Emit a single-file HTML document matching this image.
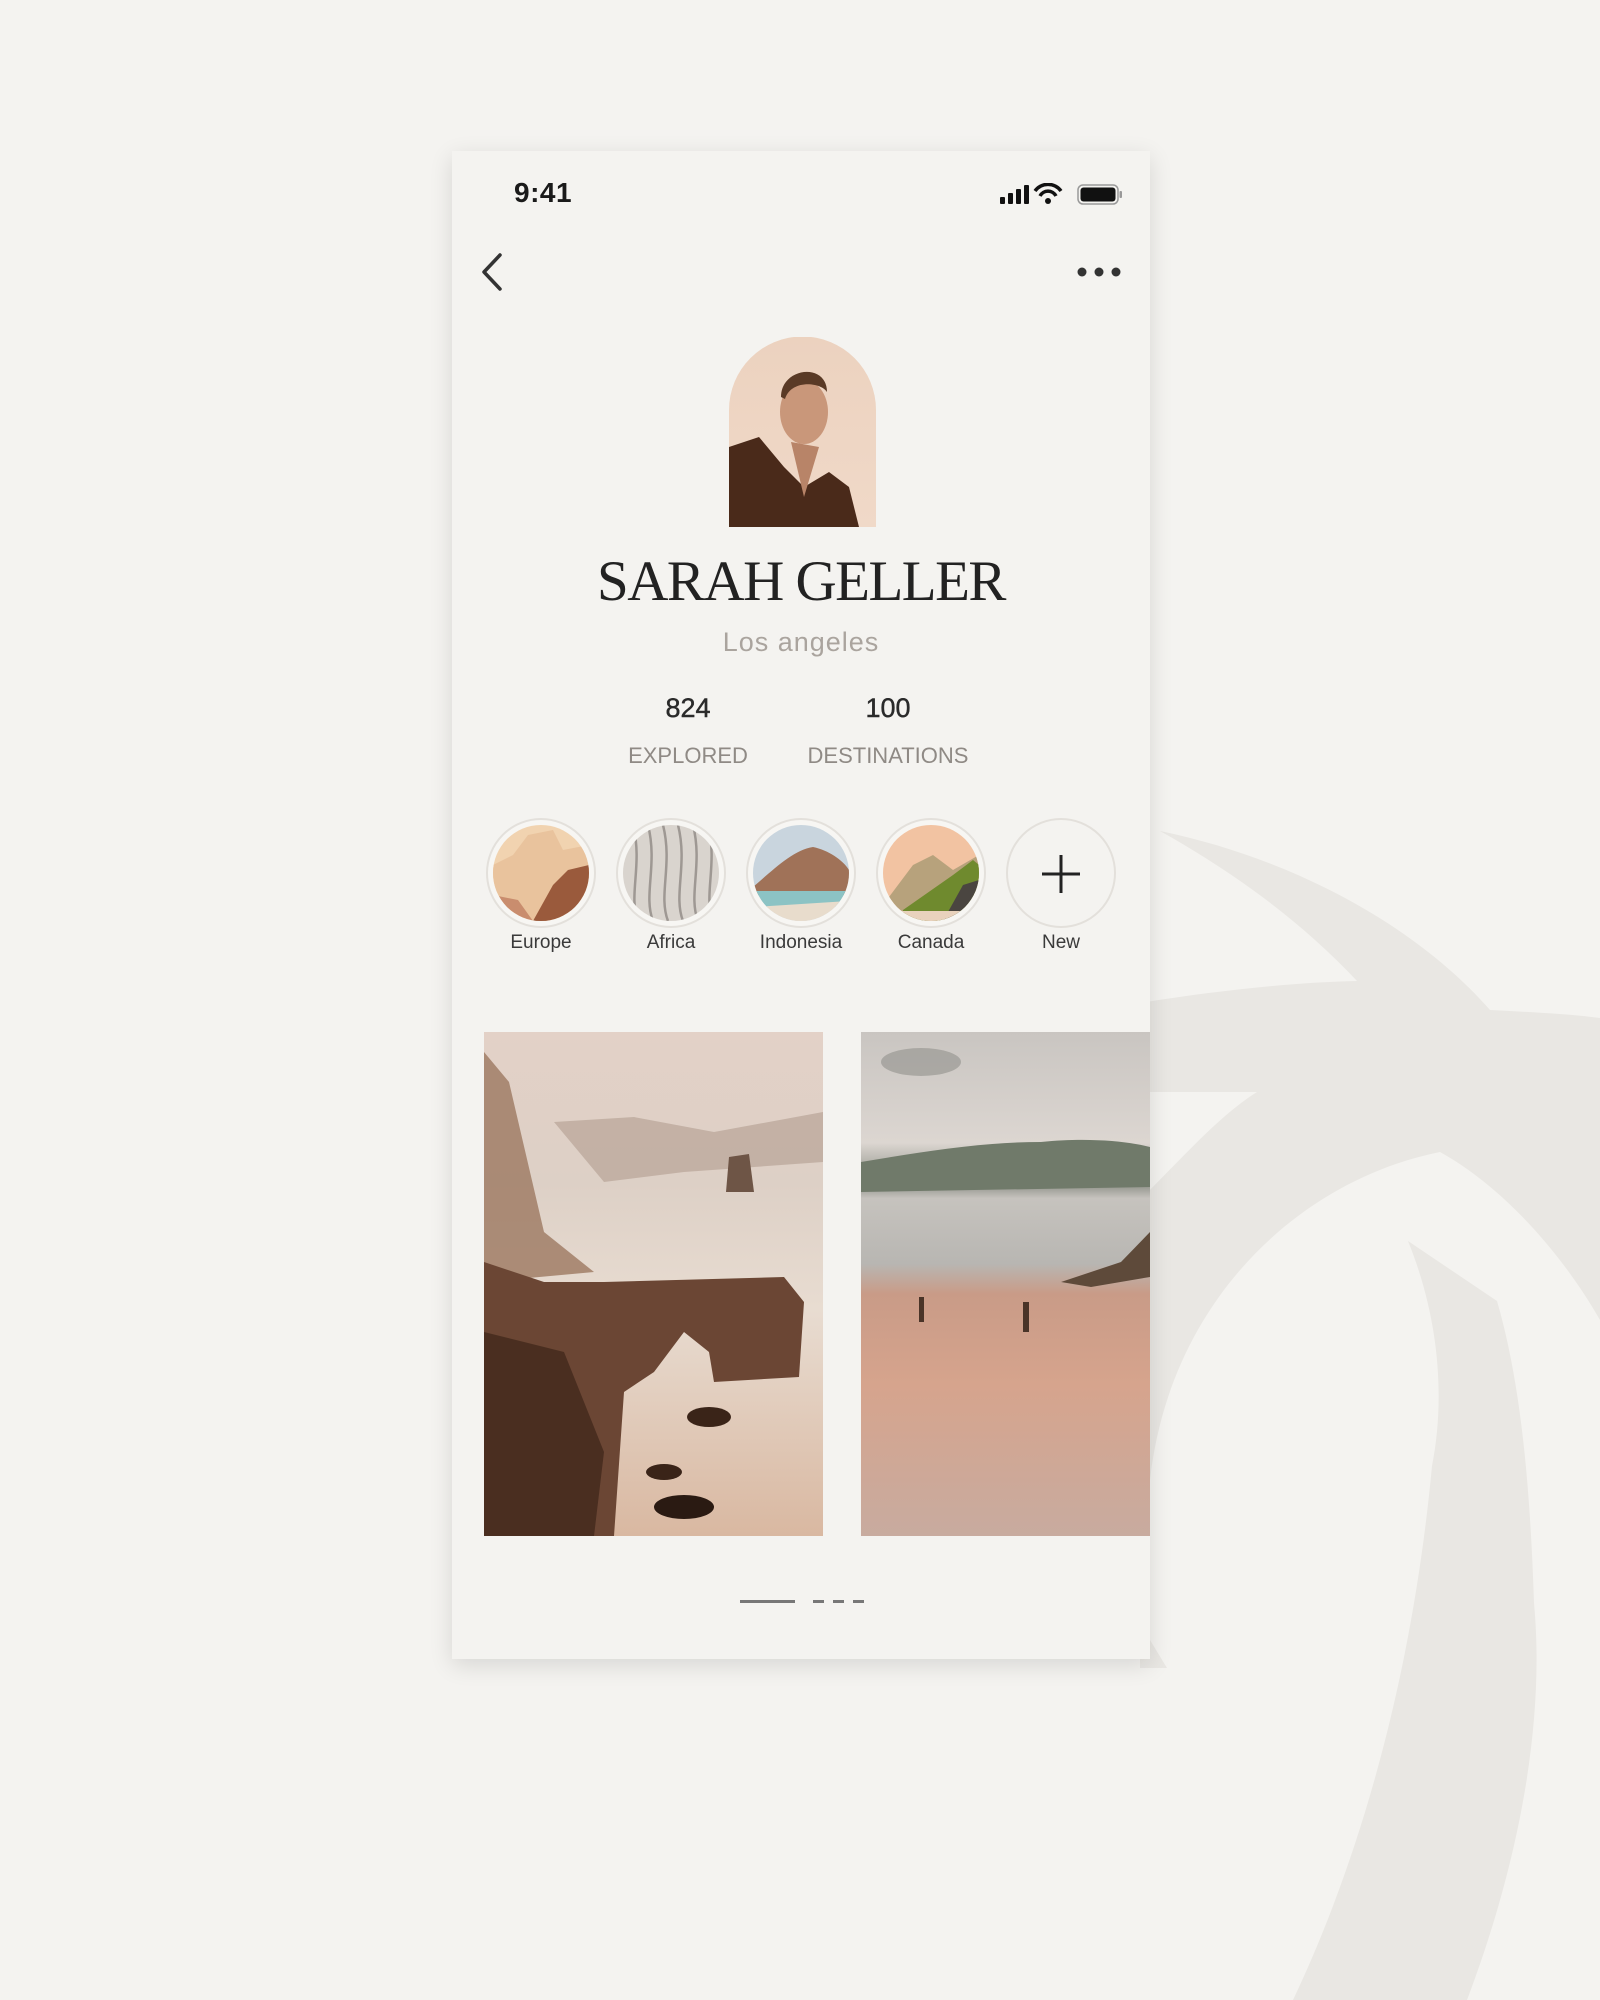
<!DOCTYPE html>
<html><head><meta charset="utf-8"><style>
*{margin:0;padding:0;box-sizing:border-box}
body{width:1600px;height:2000px;background:#f4f3f0;position:relative;overflow:hidden;font-family:"Liberation Sans",sans-serif}
#bg{position:absolute;left:0;top:0}
.phone{position:absolute;left:452px;top:151px;width:698px;height:1508px;background:#f4f3f0;box-shadow:0 6px 22px rgba(0,0,0,.12);overflow:hidden}
.abs{position:absolute}
.time{left:62px;top:26px;font-size:28px;font-weight:bold;color:#1a1a1a;letter-spacing:.5px}
.name{left:0;width:698px;top:398px;text-align:center;font-family:"Liberation Serif",serif;font-size:57px;color:#222;letter-spacing:-1.5px}
.loc{left:0;width:698px;top:476px;text-align:center;font-size:27px;color:#aaa49e;letter-spacing:1px}
.num{font-size:27px;color:#2a2a2a;text-align:center;width:200px;-webkit-text-stroke:0.4px #2a2a2a}
.lbl{font-size:22px;color:#8f8a85;text-align:center;width:220px;letter-spacing:0}
.c{position:absolute;top:667px;width:110px;height:110px;border-radius:50%;border:2px solid #e3e0db;background:#f7f6f3}
.c svg{position:absolute;left:5px;top:5px;width:96px;height:96px;border-radius:50%}
.cl{position:absolute;top:781px;width:140px;text-align:center;font-size:19px;color:#3a3a3a}
</style></head><body>
<svg id="bg" width="1600" height="2000">
<g fill="#e9e7e3">
<path d="M1160,831 C1300,860 1420,930 1490,1010 C1530,1012 1570,1014 1600,1018 L1600,1320 C1560,1250 1500,1185 1440,1152 C1300,1180 1170,1300 1150,1480 L1150,1640 L1167,1668 L1140,1668 L1140,1200 C1180,1160 1220,1115 1257,1092 L1140,1092 L1140,1003 C1220,990 1300,982 1357,981 C1300,920 1230,870 1160,831 Z"/>
<path d="M1408,1241 C1440,1320 1445,1400 1432,1466 C1410,1700 1350,1880 1293,2000 L1467,2000 C1520,1860 1545,1720 1534,1603 C1530,1480 1520,1380 1497,1301 Z"/>
</g></svg>
<div class="phone">
<div class="abs time">9:41</div>
<svg class="abs" style="left:546px;top:32px" width="130" height="24">
<rect x="2" y="14" width="5" height="7" rx="1" fill="#111"/><rect x="10" y="10" width="5" height="11" rx="1" fill="#111"/><rect x="18" y="6" width="5" height="15" rx="1" fill="#111"/><rect x="26" y="2" width="5" height="19" rx="1" fill="#111"/>
<path d="M37,8 A16,16 0 0 1 63,8" stroke="#111" stroke-width="3.5" fill="none"/><path d="M42,13 A9,9 0 0 1 58,13" stroke="#111" stroke-width="3.5" fill="none"/><circle cx="50" cy="18" r="3" fill="#111"/>
<rect x="80" y="2" width="40" height="19" rx="5" fill="none" stroke="#999" stroke-width="1.5"/><rect x="82.5" y="4.5" width="35" height="14" rx="3" fill="#111"/><rect x="121.5" y="8" width="2.5" height="7" rx="1" fill="#999"/>
</svg>
<svg class="abs" style="left:26px;top:100px" width="30" height="44"><path d="M22,4 L6,21 L22,38" stroke="#333" stroke-width="3.5" fill="none" stroke-linecap="round" stroke-linejoin="round"/></svg>
<svg class="abs" style="left:624px;top:114px" width="50" height="14"><circle cx="6" cy="7" r="4.5" fill="#333"/><circle cx="23" cy="7" r="4.5" fill="#333"/><circle cx="40" cy="7" r="4.5" fill="#333"/></svg>
<svg class="abs" style="left:277px;top:186px" width="147" height="190">
<defs><clipPath id="arch"><path d="M0,190 L0,73 A73.5,73.5 0 0 1 147,73 L147,190 Z"/></clipPath>
<linearGradient id="sk" x1="0" y1="0" x2="0" y2="1"><stop offset="0" stop-color="#ecd2bf"/><stop offset="1" stop-color="#f0d9c8"/></linearGradient></defs>
<g clip-path="url(#arch)"><rect width="147" height="190" fill="url(#sk)"/>
<path d="M0,110 L30,100 L55,130 L75,150 L100,135 L120,150 L130,190 L0,190 Z" fill="#4a2a1a"/>
<ellipse cx="75" cy="75" rx="24" ry="32" fill="#c9977a"/>
<path d="M52,60 C52,30 98,25 98,55 C92,45 62,42 56,62 Z" fill="#5a3a26"/>
<path d="M62,105 L75,160 L90,110 Z" fill="#b88468"/></g></svg>
<div class="abs name">SARAH GELLER</div>
<div class="abs loc">Los angeles</div>
<div class="abs num" style="left:136px;top:542px">824</div>
<div class="abs num" style="left:336px;top:542px">100</div>
<div class="abs lbl" style="left:126px;top:592px">EXPLORED</div>
<div class="abs lbl" style="left:326px;top:592px">DESTINATIONS</div>

<div class="c" style="left:34px"><svg viewBox="0 0 96 96"><rect width="96" height="96" fill="#f1d3b0"/><path d="M0,40 L20,30 L35,10 L60,5 L70,25 L96,20 L96,96 L0,96 Z" fill="#e9c39d"/><path d="M40,96 L60,60 L75,45 L96,40 L96,96 Z" fill="#9a5a3c"/><path d="M0,70 L25,75 L40,96 L0,96 Z" fill="#c98d6e"/></svg></div>
<div class="c" style="left:164px"><svg viewBox="0 0 96 96"><rect width="96" height="96" fill="#d9d4ce"/><g stroke="#9e9893" stroke-width="2.5" fill="none"><path d="M10,0 C20,40 5,70 15,96"/><path d="M25,0 C35,40 20,70 30,96"/><path d="M40,0 C50,40 35,70 45,96"/><path d="M55,0 C65,40 50,70 60,96"/><path d="M70,0 C80,40 65,70 75,96"/><path d="M85,0 C95,40 80,70 90,96"/></g></svg></div>
<div class="c" style="left:294px"><svg viewBox="0 0 96 96"><rect width="96" height="96" fill="#c9d5de"/><path d="M0,62 C20,45 40,25 60,22 C75,25 90,35 96,45 L96,70 L0,70 Z" fill="#a07258"/><rect y="66" width="96" height="16" fill="#8cc3c4"/><path d="M0,82 L96,76 L96,96 L0,96 Z" fill="#e8dccc"/></svg></div>
<div class="c" style="left:424px"><svg viewBox="0 0 96 96"><rect width="96" height="96" fill="#f2c3a2"/><path d="M0,80 L30,40 L50,30 L70,45 L96,30 L96,96 L0,96 Z" fill="#b7a27c"/><path d="M20,85 L70,50 L90,35 L96,40 L96,96 L20,96 Z" fill="#6f8a2e"/><path d="M60,96 L80,60 L96,55 L96,96 Z" fill="#4a4540"/><rect y="86" width="96" height="10" fill="#e9d2bd"/></svg></div>
<div class="c" style="left:554px;background:#f4f3f0"><svg viewBox="0 0 96 96" style="border-radius:0"><path d="M48,30 V68 M29,49 H67" stroke="#222" stroke-width="3"/></svg></div>
<div class="cl" style="left:19px">Europe</div>
<div class="cl" style="left:149px">Africa</div>
<div class="cl" style="left:279px">Indonesia</div>
<div class="cl" style="left:409px">Canada</div>
<div class="cl" style="left:539px">New</div>

<svg class="abs" style="left:32px;top:881px" width="339" height="504">
<defs><linearGradient id="s1" x1="0" y1="0" x2="0" y2="1"><stop offset="0" stop-color="#e3d1c7"/><stop offset=".3" stop-color="#ddd0c6"/><stop offset=".55" stop-color="#e8dcd1"/><stop offset="1" stop-color="#d9b8a1"/></linearGradient></defs>
<rect width="339" height="504" fill="url(#s1)"/>
<path d="M70,90 L150,85 L230,100 L339,80 L339,130 L200,140 L120,150 Z" fill="#b8a497" opacity=".7"/>
<path d="M245,125 L265,122 L270,160 L242,160 Z" fill="#6e5546"/>
<path d="M0,20 L25,50 L60,200 L110,240 L0,250 Z" fill="#9c7860" opacity=".8"/>
<path d="M0,230 L60,250 L120,250 L300,245 L320,270 L315,345 L230,350 L225,320 L200,300 L170,340 L140,360 L130,504 L0,504 Z" fill="#6b4634"/>
<path d="M0,300 L80,320 L120,420 L110,504 L0,504 Z" fill="#4a2e20"/>
<ellipse cx="225" cy="385" rx="22" ry="10" fill="#3a2418"/><ellipse cx="180" cy="440" rx="18" ry="8" fill="#3a2418"/><ellipse cx="200" cy="475" rx="30" ry="12" fill="#2a1a12"/>
</svg>
<svg class="abs" style="left:409px;top:881px" width="289" height="504">
<defs><linearGradient id="s2" x1="0" y1="0" x2="0" y2="1"><stop offset="0" stop-color="#c9c5c1"/><stop offset=".22" stop-color="#dcd6d1"/><stop offset=".3" stop-color="#8a8d84"/><stop offset=".33" stop-color="#c6c3be"/><stop offset=".46" stop-color="#b8b6b2"/><stop offset=".52" stop-color="#c99b87"/><stop offset=".7" stop-color="#d6a48d"/><stop offset="1" stop-color="#c8ab9f"/></linearGradient></defs>
<rect width="289" height="504" fill="url(#s2)"/>
<path d="M0,130 C60,120 120,110 180,110 C230,105 270,110 289,115 L289,155 L0,160 Z" fill="#707a6a"/>
<path d="M200,250 L260,230 L289,200 L289,245 L230,255 Z" fill="#5e4a3a"/>
<ellipse cx="60" cy="30" rx="40" ry="14" fill="#9a9894" opacity=".7"/>
<rect x="58" y="265" width="5" height="25" fill="#4a3428"/><rect x="162" y="270" width="6" height="30" fill="#4a3428"/>
</svg>
<div class="abs" style="left:288px;top:1449px;width:55px;height:3px;background:#777"></div>
<div class="abs" style="left:361px;top:1449px;width:11px;height:3px;background:#777"></div>
<div class="abs" style="left:381px;top:1449px;width:11px;height:3px;background:#777"></div>
<div class="abs" style="left:401px;top:1449px;width:11px;height:3px;background:#777"></div>
</div>
</body></html>
